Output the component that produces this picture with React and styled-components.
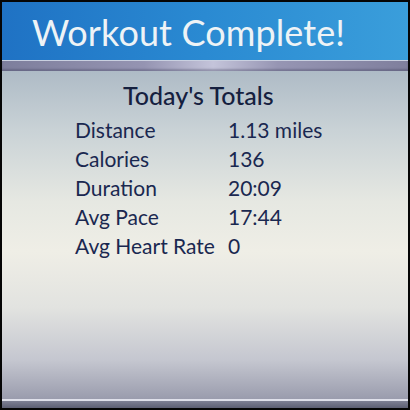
import React from 'react';
import styled, { createGlobalStyle } from 'styled-components';

const GlobalStyle = createGlobalStyle`
  html, body {
    margin: 0;
    padding: 0;
    background: #000;
  }
  * {
    box-sizing: border-box;
  }
`;

const totals = [
  { label: 'Distance', value: '1.13 miles' },
  { label: 'Calories', value: '136' },
  { label: 'Duration', value: '20:09' },
  { label: 'Avg Pace', value: '17:44' },
  { label: 'Avg Heart Rate', value: '0' },
];

const App = () => {
  return (
    <>
      <GlobalStyle />
      <Screen>
        <Header>
          <Title>Workout Complete!</Title>
        </Header>
        <Divider />
        <Body>
          <Subtitle>Today's Totals</Subtitle>
          <TotalsGrid>
            {totals.map((row) => (
              <React.Fragment key={row.label}>
                <Cell>{row.label}</Cell>
                <Cell>{row.value}</Cell>
              </React.Fragment>
            ))}
          </TotalsGrid>
        </Body>
        <Footer />
      </Screen>
    </>
  );
};

const Screen = styled.div`
  width: 410px;
  height: 410px;
  border: 2px solid #050505;
  display: flex;
  flex-direction: column;
  overflow: hidden;
  font-family: Lato, 'Liberation Sans', sans-serif;
`;

const Header = styled.div`
  height: 58px;
  padding-left: 30px;
  display: flex;
  align-items: center;
  background: linear-gradient(90deg, #1f72c4 0%, #2a8ad2 50%, #3a9edb 100%);
`;

const Title = styled.h1`
  margin: 0;
  margin-top: 1px;
  font-size: 36px;
  font-weight: 400;
  color: #eef3f6;
  letter-spacing: 0.1px;
`;

const Divider = styled.div`
  height: 11px;
  border-top: 1px solid #c9d0e0;
  background: linear-gradient(
    90deg,
    #7d7e9c 0%,
    #9594b2 35%,
    #c4c4da 52%,
    #9695b3 68%,
    #7f7f9d 100%
  );
  box-shadow: inset 0 -2px 2px rgba(60, 60, 90, 0.35);
`;

const Body = styled.div`
  flex: 1;
  display: flex;
  flex-direction: column;
  align-items: flex-start;
  padding: 9px 0 0 73px;
  background: linear-gradient(
    180deg,
    #aebbc6 0%,
    #c9d2d6 18%,
    #e6e8e2 40%,
    #efeee6 55%,
    #e2e3e0 72%,
    #c5c7d0 88%,
    #9a9cad 100%
  );
`;

const Subtitle = styled.h2`
  margin: 0 0 5px 48px;
  font-size: 25px;
  font-weight: 500;
  color: #15203f;
`;

const TotalsGrid = styled.div`
  display: grid;
  grid-template-columns: 153px auto;
  grid-auto-rows: 29px;
  align-items: center;
`;

const Cell = styled.div`
  font-size: 21px;
  color: #1a2850;
`;

const Footer = styled.div`
  height: 9px;
  border-top: 2px solid #dfe0ea;
  background: linear-gradient(180deg, #7e8094 0%, #5d5f73 100%);
`;

export default App;
